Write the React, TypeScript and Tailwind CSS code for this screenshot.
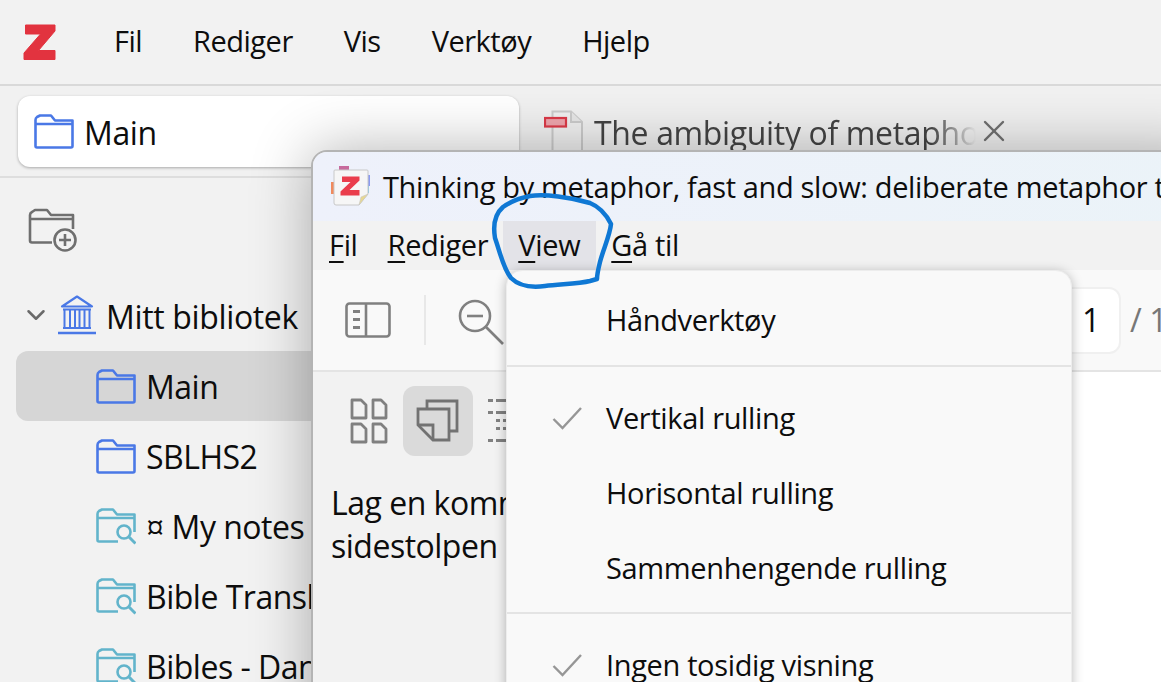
import React from 'react';
import { ChevronDown, X } from 'lucide-react';

const FolderIcon = () => (
  <svg width="40" height="35" viewBox="0 0 40 35" fill="none" stroke="#4a78e6" strokeWidth="2.6" strokeLinejoin="round" className="shrink-0">
    <path d="M1.5 32 V6 Q1.5 4 3 3 L6 1.5 H17 L21 6.5 H38.5 V32 Q38.5 33.5 37 33.5 H3 Q1.5 33.5 1.5 32 Z" />
    <path d="M1.5 10 H38.5" />
  </svg>
);

const SearchFolderIcon = () => (
  <svg width="40" height="37" viewBox="0 0 40 37" fill="none" stroke="#62b4cb" strokeWidth="2.6" strokeLinejoin="round" className="shrink-0">
    <path d="M22 33.5 H3 Q1.5 33.5 1.5 32 V6 Q1.5 4 3 3 L6 1.5 H17 L21 6.5 H38.5 V24" />
    <path d="M1.5 10 H38.5" />
    <circle cx="28" cy="24" r="6.5" />
    <path d="M33 29 L39.5 35.5" strokeWidth="3" />
  </svg>
);

const NewCollectionIcon = () => (
  <svg width="50" height="46" viewBox="0 0 50 46" fill="none" stroke="#6f6f6f" strokeWidth="2.6" strokeLinejoin="round" className="block">
    <path d="M24 35.5 H4 Q2 35.5 2 33.5 V8 Q2 6 4 5 L7 3 H19 L23 8 H45 V22" />
    <path d="M2 12 H45" />
    <circle cx="37" cy="33" r="10.5" />
    <path d="M37 27 V39 M31 33 H43" />
  </svg>
);

const LibraryIcon = () => (
  <svg width="38" height="40" viewBox="0 0 38 40" fill="none" stroke="#4a78e6" strokeWidth="2.2" className="shrink-0">
    <path d="M4 11.5 L19 1.5 L34 11.5 Z" strokeLinejoin="round" />
    <path d="M5 14.5 H33 M5 33 H33" />
    <path d="M6.5 14.5 V33 M12 14.5 V33 M17 14.5 V33 M21.5 14.5 V33 M26.5 14.5 V33 M31.5 14.5 V33" strokeWidth="2" />
    <path d="M0 38 H38" strokeWidth="2.4" />
  </svg>
);

const ZoteroZ = () => (
  <svg width="34" height="36" viewBox="0 0 34 36">
    <path d="M2.5 1 H32 V7 L15.5 26.5 H32 V35.5 H1 V29 L17.5 10 H2.5 Z" fill="#e2333f" stroke="#e2333f" strokeWidth="1" strokeLinejoin="round" />
  </svg>
);

const ReaderLogo = () => (
  <svg width="40" height="42" viewBox="0 0 40 42" className="shrink-0">
    <rect x="8" y="0" width="10" height="5" fill="#c76a9d" />
    <rect x="0" y="16" width="5" height="12" fill="#f08a5d" />
    <rect x="34" y="9" width="5" height="11" fill="#8b9bf0" />
    <rect x="34" y="20" width="4" height="7" fill="#7cc8e8" />
    <path d="M4 4 H36 Q37 4 37 5 V28 L28 39 H5 Q3 39 3 37 V5 Q3 4 4 4 Z" fill="#f6f6f6" stroke="#c8c8c8" strokeWidth="1" />
    <path d="M28 39 L30 31 L37 28 Z" fill="#e8d890" stroke="#c8c8c8" strokeWidth="0.6" />
    <path d="M11 10.5 H28.5 V14.5 L18.5 24 H28.5 V29.5 H9.5 V25.5 L19.5 16 H11 Z" fill="#ea3d4c" />
  </svg>
);

const PdfFileIcon = () => (
  <svg width="40" height="42" viewBox="0 0 40 42" fill="none" className="shrink-0">
    <path d="M8.5 41 V1.5 H27 L38 12 V41" stroke="#cccccc" strokeWidth="2" fill="#f1f1f1" />
    <path d="M27 1.5 V12 H38" stroke="#cccccc" strokeWidth="2" fill="#e8e8e8" />
    <rect x="1" y="8" width="21" height="8.5" fill="#f0a6ae" stroke="#dc3a48" strokeWidth="2.2" />
  </svg>
);

const SidebarToggleIcon = () => (
  <svg width="46" height="36" viewBox="0 0 46 36" fill="none" stroke="#808080" strokeWidth="2.6">
    <rect x="1.5" y="1.5" width="43" height="33" rx="3" />
    <path d="M21 1.5 V34.5" />
    <path d="M8 9.5 H15 M8 17.5 H15 M8 25.5 H15" strokeWidth="3" />
  </svg>
);

const ZoomOutIcon = () => (
  <svg width="46" height="46" viewBox="0 0 46 46" fill="none" stroke="#808080" strokeWidth="2.6">
    <circle cx="17" cy="17" r="15" />
    <path d="M9 17 H25" />
    <path d="M28 28 L45 45" />
  </svg>
);

const ThumbnailsIcon = () => (
  <svg width="38" height="46" viewBox="0 0 38 46" fill="none" stroke="#808080" strokeWidth="2.8" strokeLinejoin="round">
    <path d="M2 2 H11 L16 7 V20 H2 Z M23 2 H31 L36 7 V20 H23 Z M2 26 H11 L16 31 V44 H2 Z M23 26 H31 L36 31 V44 H23 Z" />
  </svg>
);

const AnnotationsIcon = () => (
  <svg width="44" height="44" viewBox="0 0 44 44" fill="none" stroke="#727272" strokeWidth="2.8" strokeLinejoin="miter">
    <path d="M11 10 V2 H41 V32 H33" />
    <path d="M2 10 H33 V41 H17 L2 26 Z" />
    <path d="M2 26 H17 V41" />
  </svg>
);

const OutlineIcon = () => (
  <svg width="20" height="44" viewBox="0 0 20 44" fill="#808080">
    <rect x="0" y="0" width="5" height="3" />
    <rect x="8" y="0" width="12" height="3" />
    <rect x="0" y="12" width="5" height="3" />
    <rect x="8" y="12" width="12" height="3" />
    <rect x="8" y="20" width="4" height="3" />
    <rect x="15" y="20" width="5" height="3" />
    <rect x="8" y="28" width="4" height="3" />
    <rect x="15" y="28" width="5" height="3" />
    <rect x="0" y="40" width="5" height="3" />
    <rect x="8" y="40" width="12" height="3" />
  </svg>
);

const CheckIcon = () => (
  <svg width="30" height="24" viewBox="0 0 30 24" fill="none" stroke="#969696" strokeWidth="2.4">
    <path d="M1.5 13 L10.5 22 L29 2" />
  </svg>
);

const SidebarRow = ({ label, saved, selected }: { label: string; saved?: boolean; selected?: boolean }) => (
  <div className={`h-[70px] flex items-center pl-[80px] gap-[10px] rounded-l-xl whitespace-nowrap tracking-[-0.5px] ${selected ? 'bg-[#d6d6d6]' : ''}`}>
    {saved ? <SearchFolderIcon /> : <FolderIcon />}
    <span className="mt-[2px]">{label}</span>
  </div>
);

const MenuItem = ({ label, checked }: { label: string; checked?: boolean }) => (
  <div className="h-[75px] flex items-center">
    <div className="w-[99px] flex justify-end pr-[24px]">{checked && <CheckIcon />}</div>
    <span>{label}</span>
  </div>
);

export default function App() {
  return (
    <div
      className="relative w-[1161px] h-[682px] overflow-hidden bg-[#f2f2f2] text-[#0d0d0d] text-[29px] tracking-[-0.35px]"
      style={{ fontFamily: '"Open Sans", "Noto Sans", sans-serif' }}
    >
      {/* Main menu bar */}
      <div className="h-[86px] border-b-2 border-[#d9d9d9] flex items-center pl-[23px]">
        <ZoteroZ />
        <div className="flex ml-[57px] gap-[51px] -mt-[2px] tracking-[-0.5px]">
          <span>Fil</span>
          <span>Rediger</span>
          <span>Vis</span>
          <span>Verktøy</span>
          <span>Hjelp</span>
        </div>
      </div>

      {/* Tabs */}
      <div className="h-[92px] border-b-2 border-[#dedede] flex items-center pl-[18px] bg-[#f1f1f1] text-[32px]">
        <div className="w-[501px] h-[71px] bg-white rounded-xl shadow-[0_1px_3px_rgba(0,0,0,0.3)] flex items-center pl-[16px] gap-[10px]">
          <FolderIcon />
          <span className="mt-[4px]">Main</span>
        </div>
        <div className="flex items-center ml-[25px] h-[71px] text-[#444]">
          <PdfFileIcon />
          <span className="w-[382px] ml-[10px] mt-[4px] overflow-hidden whitespace-nowrap [mask-image:linear-gradient(to_right,black_88%,transparent)]">
            The ambiguity of metaphor
          </span>
          <X size={36} strokeWidth={1.6} className="text-[#707070] -mt-[1px]" />
        </div>
      </div>

      {/* Collections sidebar */}
      <div className="pl-[16px] text-[32px]">
        <div className="pl-[12px] pt-[29px] pb-[42px]">
          <NewCollectionIcon />
        </div>
        <div className="h-[40px] mb-[16px] flex items-center whitespace-nowrap">
          <ChevronDown size={30} strokeWidth={2} className="text-[#6a6a6a] ml-[5px]" />
          <span className="ml-[7px] flex"><LibraryIcon /></span>
          <span className="ml-[10px] mt-[4px]">Mitt bibliotek</span>
        </div>
        <SidebarRow label="Main" selected />
        <SidebarRow label="SBLHS2" />
        <SidebarRow label="¤ My notes" saved />
        <SidebarRow label="Bible Translation" saved />
        <SidebarRow label="Bibles - Danish" saved />
      </div>

      {/* Reader window */}
      <div className="absolute left-[311px] top-[150px] w-[900px] h-[600px] border-2 border-[#b4b4b4] rounded-tl-2xl overflow-hidden flex flex-col bg-[#f2f2f2] [box-shadow:0_0_60px_rgba(0,0,0,0.3)]">
        <div className="h-[69px] shrink-0 flex items-center pl-[18px] gap-[12px] whitespace-nowrap bg-gradient-to-r from-[#eef1fb] to-[#ebf3f8]">
          <ReaderLogo />
          <span>Thinking by metaphor, fast and slow: deliberate metaphor theory</span>
        </div>
        <div className="h-[49px] shrink-0 flex items-center pl-[16px]">
          <span className="-mt-[2px]"><u className="underline-offset-[5px]">F</u>il</span>
          <span className="ml-[30px] -mt-[2px]"><u className="underline-offset-[5px]">R</u>ediger</span>
          <span className="ml-[15px] h-full w-[93px] pl-[15px] flex items-center bg-[#e3e3e8]"><span className="-mt-[2px]"><u className="underline-offset-[5px]">V</u>iew</span></span>
          <span className="ml-[15px] -mt-[2px]"><u className="underline-offset-[5px]">G</u>å til</span>
        </div>
        <div className="h-[102px] shrink-0 bg-[#f9f9f9] border-b-2 border-[#e4e4e4] flex items-center pl-[32px]">
          <SidebarToggleIcon />
          <div className="w-[2px] h-[50px] bg-[#e8e8e8] ml-[33px]" />
          <div className="ml-[32px] mt-[3px]"><ZoomOutIcon /></div>
          <div className="ml-[557px] w-[60px] h-[67px] bg-white rounded-xl border-2 border-[#f0f0f0] flex items-center justify-center text-[32px]">1</div>
          <span className="ml-[9px] text-[#777] text-[32px]">/ 1</span>
        </div>
        <div className="flex-1 flex bg-white">
          <div className="w-[560px] bg-[#f2f2f2] pl-[18px] pt-[14px]">
            <div className="flex items-center">
              <div className="ml-[19px]"><ThumbnailsIcon /></div>
              <div className="ml-[15px] w-[70px] h-[70px] rounded-xl bg-[#dadada] flex items-center justify-center"><AnnotationsIcon /></div>
              <div className="ml-[15px]"><OutlineIcon /></div>
            </div>
            <p className="mt-[25px] leading-[43px] text-[32px] tracking-[-0.5px]">Lag en kommentar i<br />sidestolpen</p>
          </div>
        </div>
      </div>

      {/* View dropdown */}
      <div className="absolute left-[506px] top-[270px] w-[566px] h-[480px] bg-[#f9f9f9] rounded-t-2xl border border-[#ededed] [box-shadow:0_2px_12px_rgba(0,0,0,0.28)]">
        <div className="h-[96px] pt-[3px] border-b-2 border-[#e4e4e4] flex items-center">
          <span className="ml-[99px]">Håndverktøy</span>
        </div>
        <div className="pt-[13px] pb-[7px] border-b-2 border-[#e4e4e4]">
          <MenuItem label="Vertikal rulling" checked />
          <MenuItem label="Horisontal rulling" />
          <MenuItem label="Sammenhengende rulling" />
        </div>
        <div className="pt-[13px]">
          <MenuItem label="Ingen tosidig visning" checked />
        </div>
      </div>

      {/* Hand drawn highlight */}
      <svg className="absolute left-0 top-0 pointer-events-none" width="1161" height="682" fill="none">
        <path
          d="M530 196 C545 194 570 197 590 203 C600 207 607 216 611 224 C610 235 603 250 600 262 C598 270 597 274 597 279 L590 281 C578 284 560 284 545 286 C530 288 518 285 511 278 C503 268 500 252 495 238 C493 226 495 214 503 207 C510 202 520 198 530 196 Z"
          stroke="#0f78d4"
          strokeWidth="4.5"
          strokeLinejoin="round"
        />
      </svg>
    </div>
  );
}
